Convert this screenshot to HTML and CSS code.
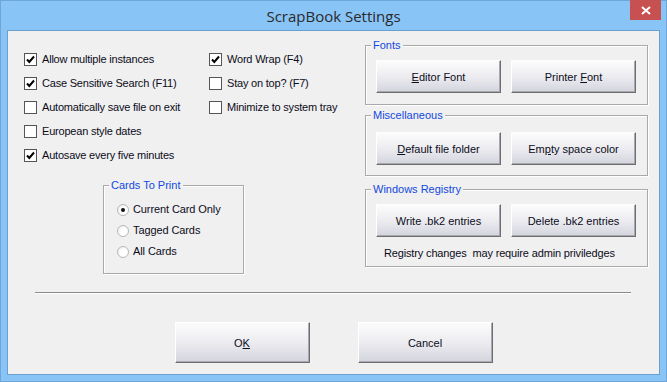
FILE: index.html
```html
<!DOCTYPE html>
<html lang="en">
<head>
    <meta charset="UTF-8">
    <title>ScrapBook Settings</title>
    <link rel="stylesheet" href="styles.css">
</head>
<body>
<div class="window">
    <div class="titlebar">
        <span></span>
        <div class="title">ScrapBook Settings</div>
        <div class="close">
            <svg width="10" height="9" viewBox="0 0 10 9"><path d="M1 1 L9 8 M9 1 L1 8" stroke="#fff" stroke-width="2"/></svg>
        </div>
    </div>
    <div class="client">
        <div class="main">
            <div class="left">
                <div class="checks">
                    <label class="check"><span class="box on"></span>Allow multiple instances</label>
                    <label class="check"><span class="box on"></span>Word Wrap (F4)</label>
                    <label class="check"><span class="box on"></span>Case Sensitive Search (F11)</label>
                    <label class="check"><span class="box"></span>Stay on top? (F7)</label>
                    <label class="check"><span class="box"></span>Automatically save file on exit</label>
                    <label class="check"><span class="box"></span>Minimize to system tray</label>
                    <label class="check wide"><span class="box"></span>European style dates</label>
                    <label class="check wide"><span class="box on"></span>Autosave every five minutes</label>
                </div>
                <div class="group cards">
                    <span class="group-title">Cards To Print</span>
                    <label class="radio"><span class="dot on"></span>Current Card Only</label>
                    <label class="radio"><span class="dot"></span>Tagged Cards</label>
                    <label class="radio"><span class="dot"></span>All Cards</label>
                </div>
            </div>
            <div class="right">
                <div class="group fonts">
                    <span class="group-title">Fonts</span>
                    <div class="btn-row">
                        <button class="btn"><u>E</u>ditor Font</button>
                        <button class="btn">Printer <u>F</u>ont</button>
                    </div>
                </div>
                <div class="group misc">
                    <span class="group-title">Miscellaneous</span>
                    <div class="btn-row">
                        <button class="btn"><u>D</u>efault file folder</button>
                        <button class="btn">Em<u>p</u>ty space color</button>
                    </div>
                </div>
                <div class="group registry">
                    <span class="group-title">Windows Registry</span>
                    <div class="btn-row">
                        <button class="btn">Write .bk2 entries</button>
                        <button class="btn">Delete .bk2 entries</button>
                    </div>
                    <p class="note">Registry changes&nbsp; may require admin priviledges</p>
                </div>
            </div>
        </div>
        <div class="separator"></div>
        <div class="actions">
            <button class="btn big">O<u>K</u></button>
            <button class="btn big">Cancel</button>
        </div>
    </div>
</div>
</body>
</html>
```

FILE: styles.css
```css
body {
    margin: 0;
    background-color: #89c4f7;
    font-family: "Liberation Sans", Arial, sans-serif;
    font-size: 11px;
    color: #0c0c1a;
}
.window {
    width: 667px;
    height: 382px;
    box-sizing: border-box;
    border: 1px solid #6fa6d9;
    padding: 0 6px 6px 6px;
    display: flex;
    flex-direction: column;
}
.titlebar {
    height: 29px;
    display: grid;
    grid-template-columns: 1fr auto 1fr;
    align-items: center;
}
.title {
    font-family: "Open Sans", "Noto Sans", sans-serif;
    font-size: 15px;
    color: #2a2a2a;
    padding-top: 1px;
}
.close {
    justify-self: end;
    align-self: start;
    margin-top: -1px;
    margin-right: -1px;
    width: 31px;
    height: 20px;
    background-color: #c75050;
    display: flex;
    align-items: center;
    justify-content: center;
}
.client {
    flex: 1;
    background-color: #f0f0f0;
    border: 1px solid #6b9fd1;
    display: flex;
    flex-direction: column;
}
.main {
    display: flex;
    align-items: flex-start;
    padding: 14px 0 0 16px;
}
.left {
    width: 341px;
    padding-top: 8px;
}
.checks {
    display: grid;
    grid-template-columns: 185px auto;
    grid-auto-rows: 24px;
}
.check {
    display: flex;
    align-items: flex-start;
    gap: 5px;
    line-height: 13px;
    white-space: nowrap;
    letter-spacing: -0.2px;
}
.check.wide {
    grid-column: 1 / 3;
}
.box {
    width: 13px;
    height: 13px;
    box-sizing: border-box;
    border: 1px solid #555;
    background-color: #fff;
    flex-shrink: 0;
}
.box.on {
    background: #fff url("data:image/svg+xml;utf8,<svg xmlns='http://www.w3.org/2000/svg' width='11' height='11'><path d='M2 5.5 L4.3 8 L9 2.5' fill='none' stroke='%23000' stroke-width='2'/></svg>") no-repeat center;
}
.group {
    position: relative;
    box-sizing: border-box;
    border: 1px solid #a9a9a9;
    box-shadow: 1px 1px 0 #fff, inset 1px 1px 0 #fff;
}
.group-title {
    position: absolute;
    top: -7px;
    left: 5px;
    padding: 0 2px;
    background-color: #f0f0f0;
    color: #1048e0;
    line-height: 13px;
}
.cards {
    margin: 12px 0 0 79px;
    width: 141px;
    height: 89px;
    padding: 17px 0 0 13px;
    display: flex;
    flex-direction: column;
    gap: 8px;
}
.radio {
    display: flex;
    align-items: center;
    gap: 4px;
    line-height: 13px;
    letter-spacing: -0.1px;
}
.dot {
    width: 12px;
    height: 12px;
    box-sizing: border-box;
    border-radius: 50%;
    border: 1px solid #b8b8b8;
    background: radial-gradient(circle at 60% 60%, #fff 40%, #e4e4e4);
    display: flex;
    align-items: center;
    justify-content: center;
}
.dot.on::after {
    content: "";
    width: 4px;
    height: 4px;
    border-radius: 50%;
    background-color: #111;
}
.right {
    width: 283px;
    display: flex;
    flex-direction: column;
}
.fonts {
    height: 60px;
    padding: 14px 0 0 10px;
}
.misc {
    margin-top: 10px;
    height: 61px;
    padding: 16px 0 0 10px;
}
.registry {
    margin-top: 13px;
    height: 78px;
    padding: 14px 0 0 10px;
}
.btn-row {
    display: flex;
    gap: 10px;
}
.btn {
    width: 125px;
    height: 33px;
    box-sizing: border-box;
    font-family: "Liberation Sans", Arial, sans-serif;
    font-size: 11px;
    color: #0c0c1a;
    background: linear-gradient(#fcfcfd, #ececf0 50%, #d4d4de);
    border: 1px solid;
    border-color: #fff #6e6e6e #6e6e6e #fff;
    box-shadow: inset -1px -1px 0 #a8a8b0;
    padding: 0;
}
.note {
    margin: 10px 0 0 8px;
    line-height: 13px;
    letter-spacing: -0.15px;
}
.separator {
    margin: 18px 0 0 27px;
    width: 596px;
    border-top: 1px solid #8a8a8a;
    border-bottom: 1px solid #fff;
}
.actions {
    display: flex;
    justify-content: center;
    gap: 48px;
    margin-top: 28px;
}
.btn.big {
    width: 135px;
    height: 41px;
}
```
